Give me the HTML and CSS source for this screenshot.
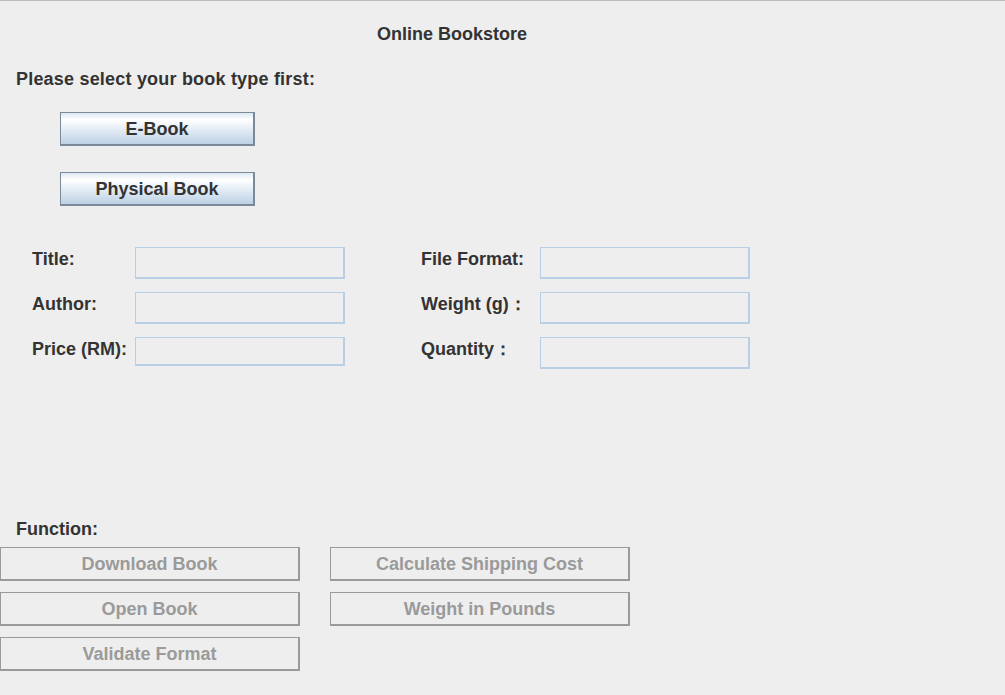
FILE: index.html
```html
<!DOCTYPE html>
<html lang="en">
<head>
<meta charset="utf-8">
<title>Online Bookstore</title>
<link rel="stylesheet" href="styles.css">
</head>
<body>
<div class="window">
  <div class="title">Online Bookstore</div>
  <div class="prompt">Please select your book type first:</div>
  <div class="type-buttons">
    <button class="type-btn">E-Book</button>
    <button class="type-btn">Physical Book</button>
  </div>
  <div class="form">
    <div class="group group-left">
      <label class="lbl">Title:</label><input class="field" type="text">
      <label class="lbl">Author:</label><input class="field" type="text">
      <label class="lbl">Price (RM):</label><input class="field field-short" type="text">
    </div>
    <div class="group group-right">
      <label class="lbl">File Format:</label><input class="field" type="text">
      <label class="lbl">Weight (g)：</label><input class="field" type="text">
      <label class="lbl">Quantity：</label><input class="field" type="text">
    </div>
  </div>
  <div class="function-label">Function:</div>
  <div class="functions">
    <button class="fn-btn" disabled>Download Book</button>
    <button class="fn-btn" disabled>Calculate Shipping Cost</button>
    <button class="fn-btn" disabled>Open Book</button>
    <button class="fn-btn" disabled>Weight in Pounds</button>
    <button class="fn-btn" disabled>Validate Format</button>
  </div>
</div>
</body>
</html>
```

FILE: styles.css
```css
html, body {
  margin: 0;
  padding: 0;
  background: #eeeeee;
}

body {
  border-top: 1px solid #bdbdbd;
  width: 1005px;
  height: 694px;
  overflow: hidden;
  font-family: "Liberation Sans", Arial, sans-serif;
  font-weight: bold;
  font-size: 18px;
  line-height: 21px;
  color: #333333;
}

.window {
  display: flex;
  flex-direction: column;
  align-items: flex-start;
}

.title {
  width: 904px;
  text-align: center;
  margin-top: 23px;
}

.prompt {
  margin-top: 24px;
  padding-left: 16px;
  letter-spacing: 0.2px;
}

.type-buttons {
  margin-top: 22px;
  margin-left: 60px;
  display: flex;
  flex-direction: column;
  gap: 26px;
}

button {
  font: inherit;
  margin: 0;
  padding: 2px 0 0 0;
  box-sizing: border-box;
}

.type-btn {
  width: 195px;
  height: 34px;
  color: #333333;
  border-style: solid;
  border-color: #7a8a99;
  border-width: 1px 2px 2px 1px;
  background: linear-gradient(to bottom, #dde8f3 0%, #ffffff 22%, #e6eef6 50%, #bdd1e5 100%);
}

.form {
  margin-top: 41px;
  padding-left: 32px;
  display: flex;
  gap: 76px;
}

.group {
  display: grid;
  grid-template-rows: 32px 32px 32px;
  row-gap: 13px;
  align-items: start;
}

.group-left {
  grid-template-columns: 103px 210px;
}

.group-right {
  grid-template-columns: 119px 210px;
}

.lbl {
  padding-top: 2px;
  white-space: nowrap;
}

.field {
  box-sizing: border-box;
  width: 210px;
  height: 32px;
  margin: 0;
  padding: 0 4px;
  background: #eeeeee;
  border-style: solid;
  border-color: #b8cfe5;
  border-width: 1px 2px 2px 1px;
  font: inherit;
  font-weight: normal;
  outline: none;
}

.field-short {
  height: 29px;
}

.function-label {
  margin-top: 149px;
  padding-left: 16px;
  padding-top: 1px;
}

.functions {
  margin-top: 7px;
  display: grid;
  grid-template-columns: 300px 300px;
  grid-auto-rows: 34px;
  column-gap: 30px;
  row-gap: 11px;
}

.fn-btn {
  width: 300px;
  height: 34px;
  color: #9a9a9a;
  background: #eeeeee;
  border-style: solid;
  border-color: #9a9a9a;
  border-width: 1px 2px 2px 1px;
}
```
